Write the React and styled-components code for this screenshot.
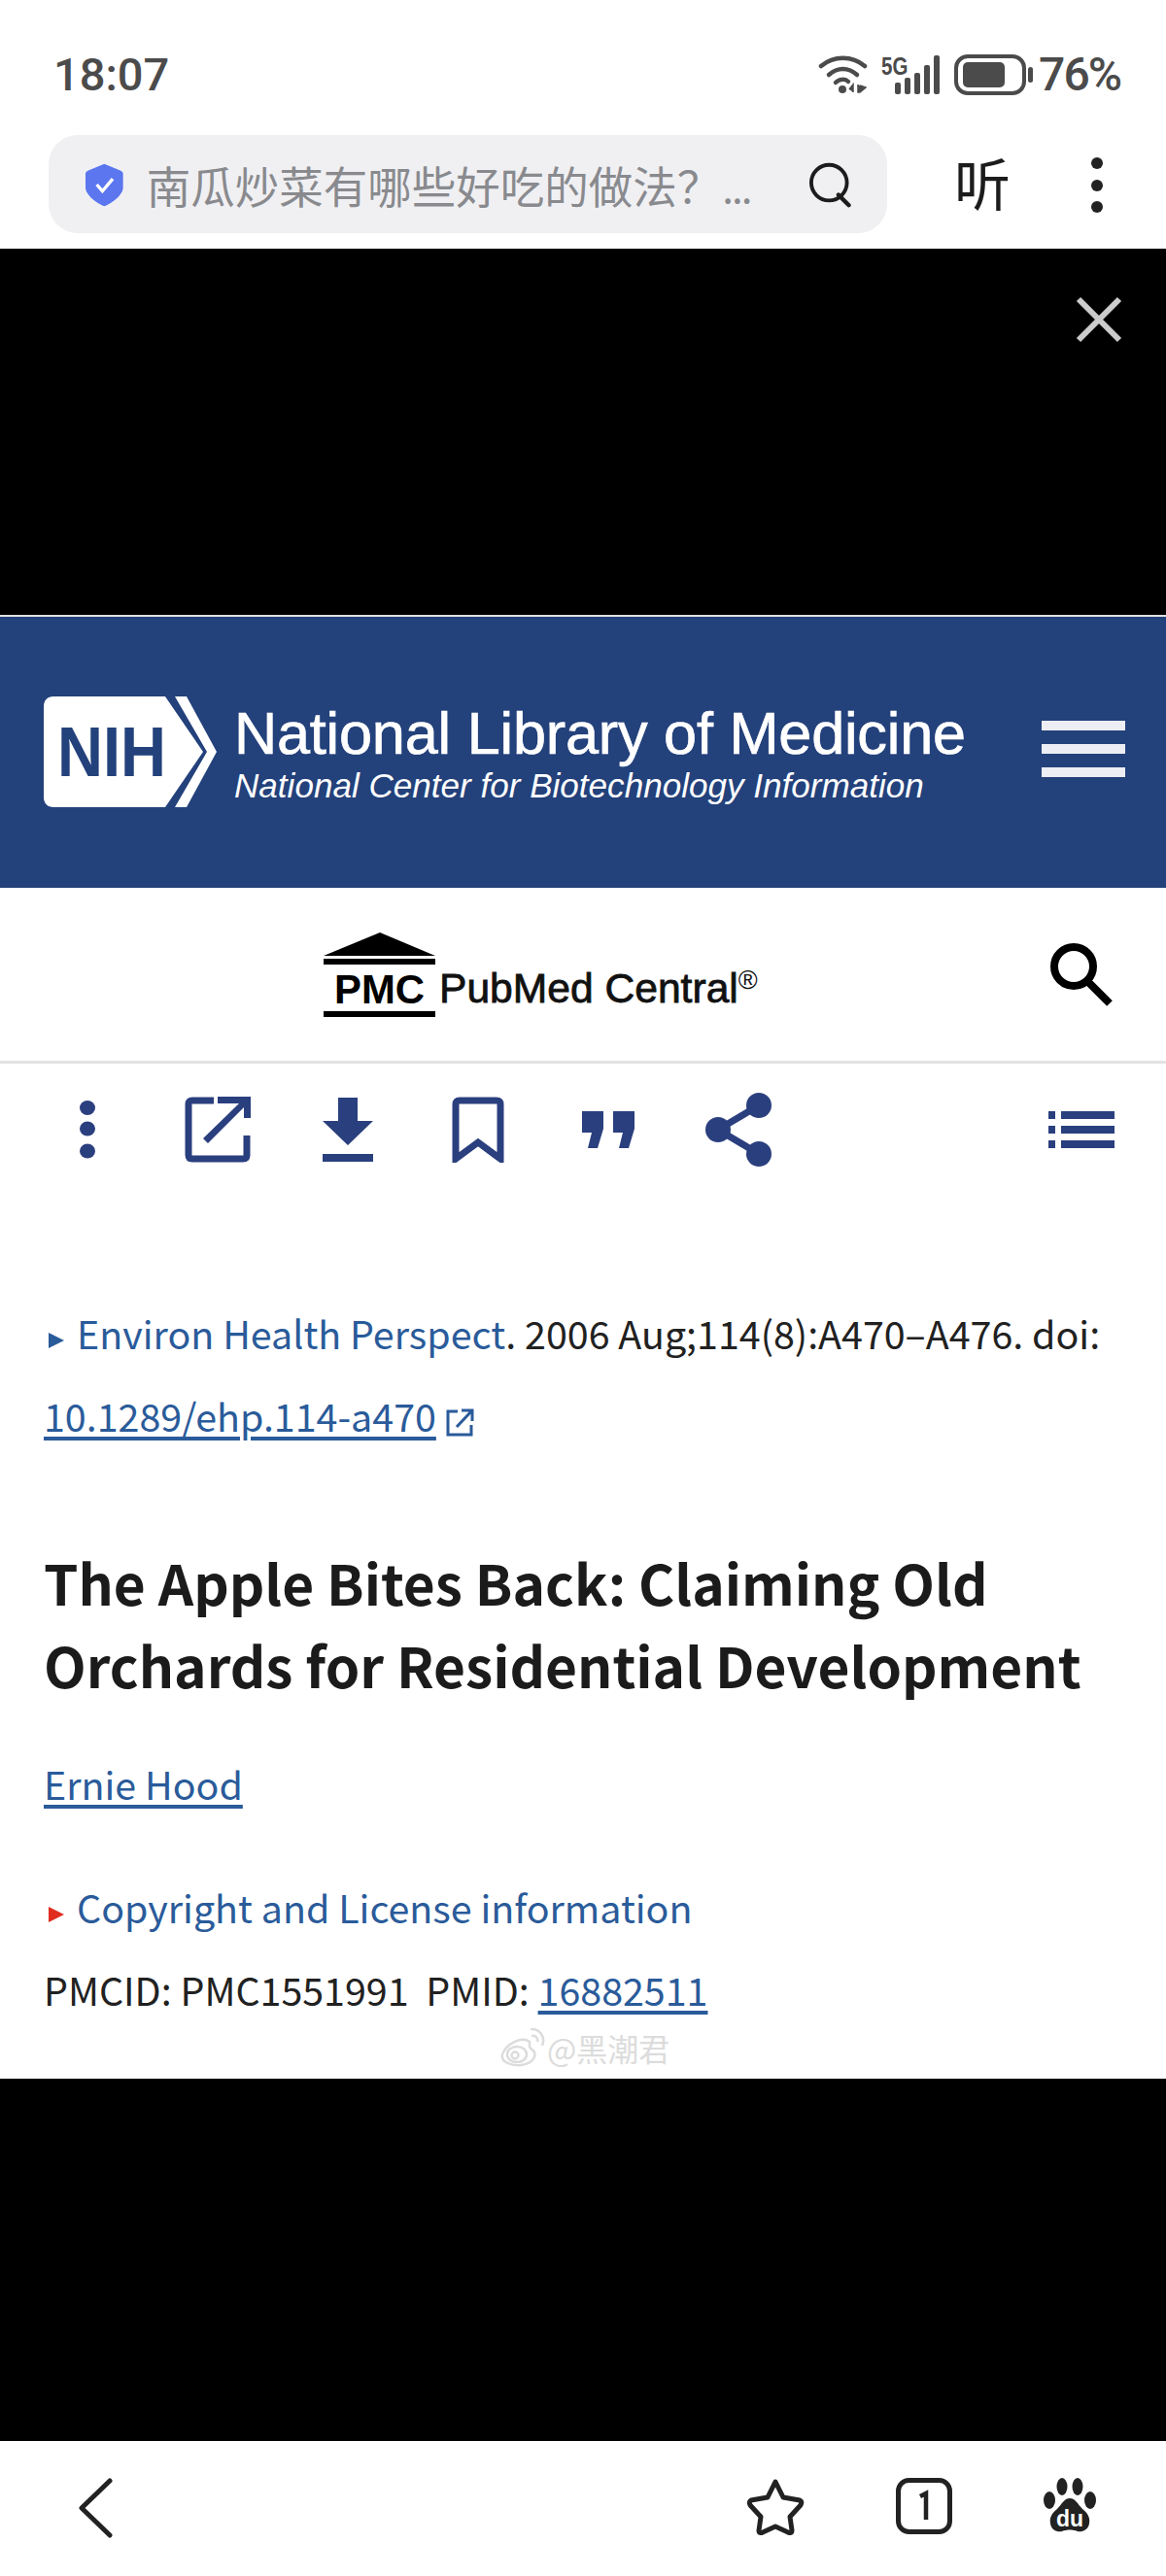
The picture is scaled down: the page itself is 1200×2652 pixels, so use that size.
import React from "react";
import styled, { createGlobalStyle } from "styled-components";

const GlobalStyle = createGlobalStyle`
  html, body {
    margin: 0;
    padding: 0;
    background: #fff;
  }
`;

const NAVY = "#2a3f7e";
const LINK = "#2a5b9a";

const Page = styled.div`
  width: 1200px;
  height: 2652px;
  display: flex;
  flex-direction: column;
  overflow: hidden;
  font-family: "Noto Sans CJK SC", sans-serif;
  color: #212121;
`;

const StatusBar = styled.div`
  height: 139px;
  flex: none;
  display: flex;
  align-items: flex-start;
  justify-content: space-between;
  padding: 48px 47px 0 55px;
  box-sizing: border-box;
  font-family: Roboto, sans-serif;
  font-weight: 500;
  font-size: 47px;
  line-height: 58px;
  color: #4b4b4b;
`;

const StatusRight = styled.div`
  display: flex;
  align-items: flex-start;
  gap: 5px;
`;

const StatusIcons = styled.div`
  display: flex;
  align-items: flex-start;
  gap: 13px;
  margin-top: 8px;
`;

const SignalSvg = styled.svg`
  margin-top: -6px;
`;

const Percent = styled.span`
  font-size: 48px;
  letter-spacing: -2px;
`;

const AddressRow = styled.div`
  height: 117px;
  flex: none;
  display: flex;
  align-items: flex-start;
  padding-left: 50px;
  box-sizing: border-box;
`;

const SearchBar = styled.div`
  width: 863px;
  height: 101px;
  flex: none;
  border-radius: 30px;
  background: #f0f0f3;
  display: flex;
  align-items: center;
  padding: 0 35px 0 38px;
  box-sizing: border-box;
`;

const Query = styled.span`
  margin-left: 24px;
  width: 681px;
  flex: none;
  font-size: 45.5px;
  color: #898a8e;
  white-space: nowrap;
`;

const QueryDots = styled.span`
  margin-left: 2px;
  font-size: 30px;
  font-weight: 700;
`;

const ListenLabel = styled.span`
  margin: 8px 0 0 69px;
  font-size: 58px;
  line-height: 80px;
  color: #1c1c1c;
`;

const MoreDots = styled.div`
  margin: 23px 0 0 83px;
  display: flex;
  flex-direction: column;
  gap: 10.5px;
  i {
    display: block;
    width: 12px;
    height: 12px;
    border-radius: 50%;
    background: #222;
  }
`;

const VideoPanel = styled.div`
  height: ${(p) => p.$height}px;
  flex: none;
  background: #000;
  display: flex;
  justify-content: flex-end;
  align-items: flex-start;
  padding: 49px 45px 0 0;
  box-sizing: border-box;
`;

const Rule = styled.div`
  height: 2px;
  flex: none;
  background: #e0e0e0;
`;

const NlmBanner = styled.div`
  height: 279px;
  flex: none;
  background: #23417b;
  display: flex;
  align-items: center;
  padding: 0 42px 2px 45px;
  box-sizing: border-box;
  color: #fff;
  font-family: "Liberation Sans", sans-serif;
`;

const NlmText = styled.div`
  margin-left: 18px;
  flex: 1;
  display: flex;
  flex-direction: column;
`;

const NlmTitle = styled.div`
  font-size: 61.2px;
  line-height: 70px;
  letter-spacing: -0.2px;
  white-space: nowrap;
  -webkit-text-stroke: 0.7px #fff;
`;

const NlmSub = styled.div`
  font-size: 35.1px;
  line-height: 38px;
  font-style: italic;
  white-space: nowrap;
`;

const Hamburger = styled.div`
  width: 86px;
  margin-bottom: 5px;
  display: flex;
  flex-direction: column;
  gap: 14px;
  i {
    display: block;
    height: 10px;
    background: #eceef3;
  }
`;

const PmcBar = styled.div`
  height: 181px;
  flex: none;
  display: flex;
  align-items: flex-start;
  padding: 46px 54px 0 333px;
  box-sizing: border-box;
  border-bottom: 3px solid #e2e2e2;
  justify-content: space-between;
`;

const PmcBrand = styled.div`
  display: flex;
  align-items: flex-start;
`;

const PmcName = styled.span`
  margin: 30px 0 0 4px;
  font-family: "Liberation Sans", sans-serif;
  font-size: 42.6px;
  line-height: 54px;
  color: #111;
  white-space: nowrap;
  -webkit-text-stroke: 0.8px #111;
  sup {
    font-size: 27px;
    line-height: 0;
    vertical-align: 14px;
    -webkit-text-stroke: 0;
  }
`;

const PmcSearch = styled.div`
  margin-top: 10px;
`;

const Toolbar = styled.div`
  height: 132px;
  flex: none;
  display: flex;
  justify-content: space-between;
  padding: 0 20px 0 23px;
  box-sizing: border-box;
`;

const ToolGroup = styled.div`
  display: flex;
`;

const ToolButton = styled.div`
  width: 134px;
  height: 136px;
  display: flex;
  align-items: center;
  justify-content: center;
`;

const Article = styled.main`
  position: relative;
  height: 913px;
  flex: none;
  padding: 102px 40px 0 45px;
  box-sizing: border-box;
  font-size: 39.4px;
  line-height: 85px;
`;

const Citation = styled.div`
  white-space: nowrap;
`;

const Caret = styled.span`
  display: inline-block;
  width: 0;
  height: 0;
  margin: 0 13px 1px 5px;
  border-style: solid;
  border-width: 8.5px 0 8.5px 16px;
  border-color: transparent transparent transparent ${(p) => p.$color};
`;

const BlueText = styled.span`
  color: ${LINK};
`;

const Link = styled.a`
  color: ${LINK};
  text-decoration: underline;
  text-decoration-thickness: 4px;
  text-underline-offset: 5px;
`;

const ExternalMark = styled.svg`
  margin-left: 9px;
  vertical-align: -6px;
`;

const Title = styled.h1`
  margin: 87px 0 0;
  font-size: 56.8px;
  line-height: 85px;
  font-weight: 700;
  color: #1b1b1b;
  white-space: nowrap;
`;

const Author = styled.div`
  margin-top: 37px;
`;

const Copyright = styled.div`
  margin-top: 42px;
`;

const Ids = styled.div`
  white-space: pre;
`;

const Watermark = styled.div`
  position: absolute;
  left: 515px;
  top: 859px;
  display: flex;
  align-items: center;
  gap: 2px;
  font-size: 32px;
  line-height: 44px;
  color: #dcdcdc;
`;

const BottomBar = styled.nav`
  flex: 1;
  display: flex;
  align-items: flex-start;
  padding: 38px 72px 0 80px;
  box-sizing: border-box;
`;

const BottomRight = styled.div`
  margin-left: auto;
  display: flex;
  align-items: flex-start;
  gap: 94px;
`;

const CloseIcon = () => (
  <svg width="48" height="48" viewBox="0 0 48 48">
    <path d="M3 3 45 45M45 3 3 45" stroke="#cccccc" strokeWidth="6" fill="none" />
  </svg>
);

const Wifi = () => (
  <svg width="52" height="42" viewBox="0 0 52 42">
    <g fill="none" stroke="#4b4b4b" strokeWidth="4.5" strokeLinecap="round">
      <path d="M3 12C16 1 35 1 48 12" />
      <path d="M11 21C20 13 31 13 40 21" />
      <path d="M18 29C22 25 28 25 31 28" />
    </g>
    <circle cx="25" cy="36" r="4" fill="#4b4b4b" />
    <path d="M36 39v-8l-4 5M41 31v8h2l6-5-6-2" fill="#4b4b4b" stroke="#4b4b4b" strokeWidth="1.5" />
  </svg>
);

const Signal = () => (
  <SignalSvg width="62" height="48" viewBox="0 -6 62 48">
    <text x="0" y="21" transform="scale(0.82 1)" fontFamily="'Liberation Sans',sans-serif" fontWeight="700" fontSize="25" fill="#4b4b4b">5G</text>
    <g fill="#4b4b4b">
      <rect x="14" y="29" width="6" height="12" rx="2" />
      <rect x="24" y="24" width="6" height="17" rx="2" />
      <rect x="34" y="19" width="6" height="22" rx="2" />
      <rect x="44" y="11" width="6" height="30" rx="2" />
      <rect x="54" y="1" width="6" height="40" rx="2" />
    </g>
  </SignalSvg>
);

const Battery = () => (
  <svg width="82" height="42" viewBox="0 0 82 42">
    <rect x="2" y="2" width="70" height="38" rx="12" fill="none" stroke="#4b4b4b" strokeWidth="4" />
    <rect x="9" y="8" width="43" height="26" rx="5" fill="#4b4b4b" />
    <rect x="76" y="13" width="5" height="16" rx="2.5" fill="#4b4b4b" />
  </svg>
);

const Shield = () => (
  <svg width="40" height="46" viewBox="0 0 40 46">
    <path d="M20 1 37 8c2 1 3 2 3 4v14c0 8-12 17-20 20C12 43 0 34 0 26V12c0-2 1-3 3-4Z" fill="#5b76ee" />
    <path d="M12 23l6 7 11-13" fill="none" stroke="#fff" strokeWidth="3.5" />
  </svg>
);

const BarSearch = () => (
  <svg width="48" height="48" viewBox="0 0 48 48">
    <circle cx="22" cy="22" r="19" fill="none" stroke="#1c1c1c" strokeWidth="4" />
    <path d="M32 35l11 11" stroke="#1c1c1c" strokeWidth="4.5" strokeLinecap="round" />
  </svg>
);

const NihLogo = () => (
  <svg width="178" height="114" viewBox="0 0 178 114">
    <path d="M10 0H125L164 57 125 114H10C4 114 0 110 0 104V10C0 4 4 0 10 0Z" fill="#fff" />
    <path d="M135 0h12l31 57-31 57h-12l33-57Z" fill="#fff" />
    <text x="14" y="82" fontFamily="'Liberation Sans',sans-serif" fontWeight="700" fontSize="72" fill="#23417b" textLength="112" lengthAdjust="spacingAndGlyphs">NIH</text>
  </svg>
);

const PmcLogo = () => (
  <svg width="115" height="88" viewBox="0 0 115 88">
    <path d="M58 0 115 24H0Z" fill="#000" />
    <rect x="0" y="27" width="115" height="6" fill="#000" />
    <text x="11" y="73" fontFamily="'Liberation Sans',sans-serif" fontWeight="700" fontSize="43" fill="#000" textLength="93" lengthAdjust="spacingAndGlyphs">PMC</text>
    <rect x="0" y="81" width="115" height="6" fill="#000" />
  </svg>
);

const PmcSearchIcon = () => (
  <svg width="66" height="66" viewBox="0 0 66 66">
    <circle cx="25" cy="25" r="20" fill="none" stroke="#000" strokeWidth="8" />
    <path d="M39 40 62 63" stroke="#000" strokeWidth="8" />
  </svg>
);

const Kebab = () => (
  <svg width="16" height="60" viewBox="0 0 16 60">
    <ellipse cx="8" cy="7.5" rx="8" ry="7.5" fill={NAVY} />
    <ellipse cx="8" cy="29" rx="8" ry="7.5" fill={NAVY} />
    <ellipse cx="8" cy="52" rx="8" ry="7.5" fill={NAVY} />
  </svg>
);

const ExternalIcon = () => (
  <svg width="68" height="68" viewBox="0 0 68 68">
    <path d="M30 4H8C5 4 4 5 4 8V60C4 63 5 64 8 64H60C63 64 64 63 64 60V40" fill="none" stroke={NAVY} strokeWidth="7" />
    <path d="M34 0H68V22H61V11L24 48 19 43 56 7H34Z" fill={NAVY} />
  </svg>
);

const DownloadIcon = () => (
  <svg width="54" height="66" viewBox="0 0 54 66">
    <path d="M17 0H37V24H53L27 49 1 24H17ZM1 58H53V66H1Z" fill={NAVY} />
  </svg>
);

const BookmarkIcon = () => (
  <svg width="54" height="68" viewBox="0 0 54 68">
    <path d="M4 64V8C4 5 5 4 8 4H46C49 4 50 5 50 8V64L27 47Z" fill="none" stroke={NAVY} strokeWidth="7" />
  </svg>
);

const QuoteIcon = () => (
  <svg width="54" height="38" viewBox="0 0 54 38">
    <path d="M0 0H22V18L16 38H6L10 22H0ZM32 0H54V18L48 38H38L42 22H32Z" fill={NAVY} />
  </svg>
);

const ShareIcon = () => (
  <svg width="68" height="76" viewBox="0 0 68 76">
    <circle cx="55" cy="13" r="13" fill={NAVY} />
    <circle cx="13" cy="38" r="13" fill={NAVY} />
    <circle cx="55" cy="63" r="13" fill={NAVY} />
    <path d="M55 13 13 38 55 63" fill="none" stroke={NAVY} strokeWidth="7" />
  </svg>
);

const ListIcon = () => (
  <svg width="68" height="38" viewBox="0 0 68 38">
    <path d="M0 0H7V8H0ZM13 0H68V8H13ZM0 15H7V23H0ZM13 15H68V23H13ZM0 30H7V38H0ZM13 30H68V38H13Z" fill={NAVY} />
  </svg>
);

const SmallExternal = () => (
  <ExternalMark width="30" height="30" viewBox="0 0 30 30">
    <path d="M13 3H3V27H27V17" fill="none" stroke={LINK} strokeWidth="3" />
    <path d="M17 2H28V13M27 3 12 19" fill="none" stroke={LINK} strokeWidth="3" />
  </ExternalMark>
);

const WeiboIcon = () => (
  <svg width="46" height="40" viewBox="0 0 46 40">
    <g fill="none" stroke="#dcdcdc" strokeWidth="2.5">
      <path d="M30 14C22 8 6 16 2 27 0 35 12 39 21 38 31 37 37 31 35 25 34 22 30 21 30 19Z" />
      <ellipse cx="17" cy="27" rx="10" ry="8" />
      <circle cx="15" cy="28" r="3.5" />
      <path d="M31 1C40 0 47 9 43 18M32 8C37 7 39 11 38 14" />
    </g>
  </svg>
);

const BackIcon = () => (
  <svg width="36" height="62" viewBox="0 0 36 62">
    <path d="M33 3 4 31 33 59" fill="none" stroke="#222" strokeWidth="5" strokeLinecap="round" strokeLinejoin="round" />
  </svg>
);

const StarIcon = () => (
  <svg width="60" height="60" viewBox="0 0 60 60">
    <path d="M30 4 38 20 55 23C57 24 57 26 56 28L45 40 47 54C47 57 45 57 43 56L30 50 17 56C15 57 13 57 13 54L15 40 4 28C3 26 3 24 5 23L22 20Z" fill="none" stroke="#222" strokeWidth="5" strokeLinejoin="round" />
  </svg>
);

const TabIcon = () => (
  <svg width="58" height="58" viewBox="0 0 58 58">
    <rect x="2.5" y="2.5" width="53" height="53" rx="11" fill="none" stroke="#222" strokeWidth="5" />
    <path d="M25 19 31 16V43" fill="none" stroke="#222" strokeWidth="4.5" />
  </svg>
);

const BaiduIcon = () => (
  <svg width="54" height="56" viewBox="0 0 54 56">
    <g fill="#222">
      <ellipse cx="19" cy="9" rx="5.5" ry="9" />
      <ellipse cx="35" cy="9" rx="5.5" ry="9" />
      <ellipse cx="6" cy="23" rx="6" ry="9" />
      <ellipse cx="48" cy="23" rx="6" ry="9" />
      <path d="M27 21C33 21 35 27 40 32 46 37 48 41 47 47 46 54 39 56 35 55 30 53 24 53 19 55 14 56 8 54 7 47 6 41 8 37 14 32 19 27 21 21 27 21Z" />
    </g>
    <text x="27" y="50" textAnchor="middle" fontFamily="'Liberation Sans',sans-serif" fontWeight="700" fontSize="23" fill="#fff">du</text>
  </svg>
);

export default function App() {
  return (
    <Page>
      <GlobalStyle />
      <StatusBar>
        <span>18:07</span>
        <StatusRight>
          <StatusIcons>
            <Wifi />
            <Signal />
            <Battery />
          </StatusIcons>
          <Percent>76%</Percent>
        </StatusRight>
      </StatusBar>

      <AddressRow>
        <SearchBar>
          <Shield />
          <Query>
            南瓜炒菜有哪些好吃的做法？<QueryDots>...</QueryDots>
          </Query>
          <BarSearch />
        </SearchBar>
        <ListenLabel>听</ListenLabel>
        <MoreDots>
          <i />
          <i />
          <i />
        </MoreDots>
      </AddressRow>

      <VideoPanel $height={377}>
        <CloseIcon />
      </VideoPanel>
      <Rule />

      <NlmBanner>
        <NihLogo />
        <NlmText>
          <NlmTitle>National Library of Medicine</NlmTitle>
          <NlmSub>National Center for Biotechnology Information</NlmSub>
        </NlmText>
        <Hamburger>
          <i />
          <i />
          <i />
        </Hamburger>
      </NlmBanner>

      <PmcBar>
        <PmcBrand>
          <PmcLogo />
          <PmcName>
            PubMed Central<sup>®</sup>
          </PmcName>
        </PmcBrand>
        <PmcSearch>
          <PmcSearchIcon />
        </PmcSearch>
      </PmcBar>

      <Toolbar>
        <ToolGroup>
          <ToolButton>
            <Kebab />
          </ToolButton>
          <ToolButton>
            <ExternalIcon />
          </ToolButton>
          <ToolButton>
            <DownloadIcon />
          </ToolButton>
          <ToolButton>
            <BookmarkIcon />
          </ToolButton>
          <ToolButton>
            <QuoteIcon />
          </ToolButton>
          <ToolButton>
            <ShareIcon />
          </ToolButton>
        </ToolGroup>
        <ToolButton>
          <ListIcon />
        </ToolButton>
      </Toolbar>

      <Article>
        <Citation>
          <Caret $color={LINK} />
          <BlueText>Environ Health Perspect</BlueText>. 2006 Aug;114(8):A470–A476. doi:
        </Citation>
        <Citation>
          <Link>10.1289/ehp.114-a470</Link>
          <SmallExternal />
        </Citation>
        <Title>
          The Apple Bites Back: Claiming Old
          <br />
          Orchards for Residential Development
        </Title>
        <Author>
          <Link>Ernie Hood</Link>
        </Author>
        <Copyright>
          <Caret $color="#e02d20" />
          <BlueText>Copyright and License information</BlueText>
        </Copyright>
        <Ids>
          PMCID: PMC1551991{"  "}PMID: <Link>16882511</Link>
        </Ids>
        <Watermark>
          <WeiboIcon />
          <span>@黑潮君</span>
        </Watermark>
      </Article>

      <VideoPanel $height={373} />

      <BottomBar>
        <BackIcon />
        <BottomRight>
          <StarIcon />
          <TabIcon />
          <BaiduIcon />
        </BottomRight>
      </BottomBar>
    </Page>
  );
}
